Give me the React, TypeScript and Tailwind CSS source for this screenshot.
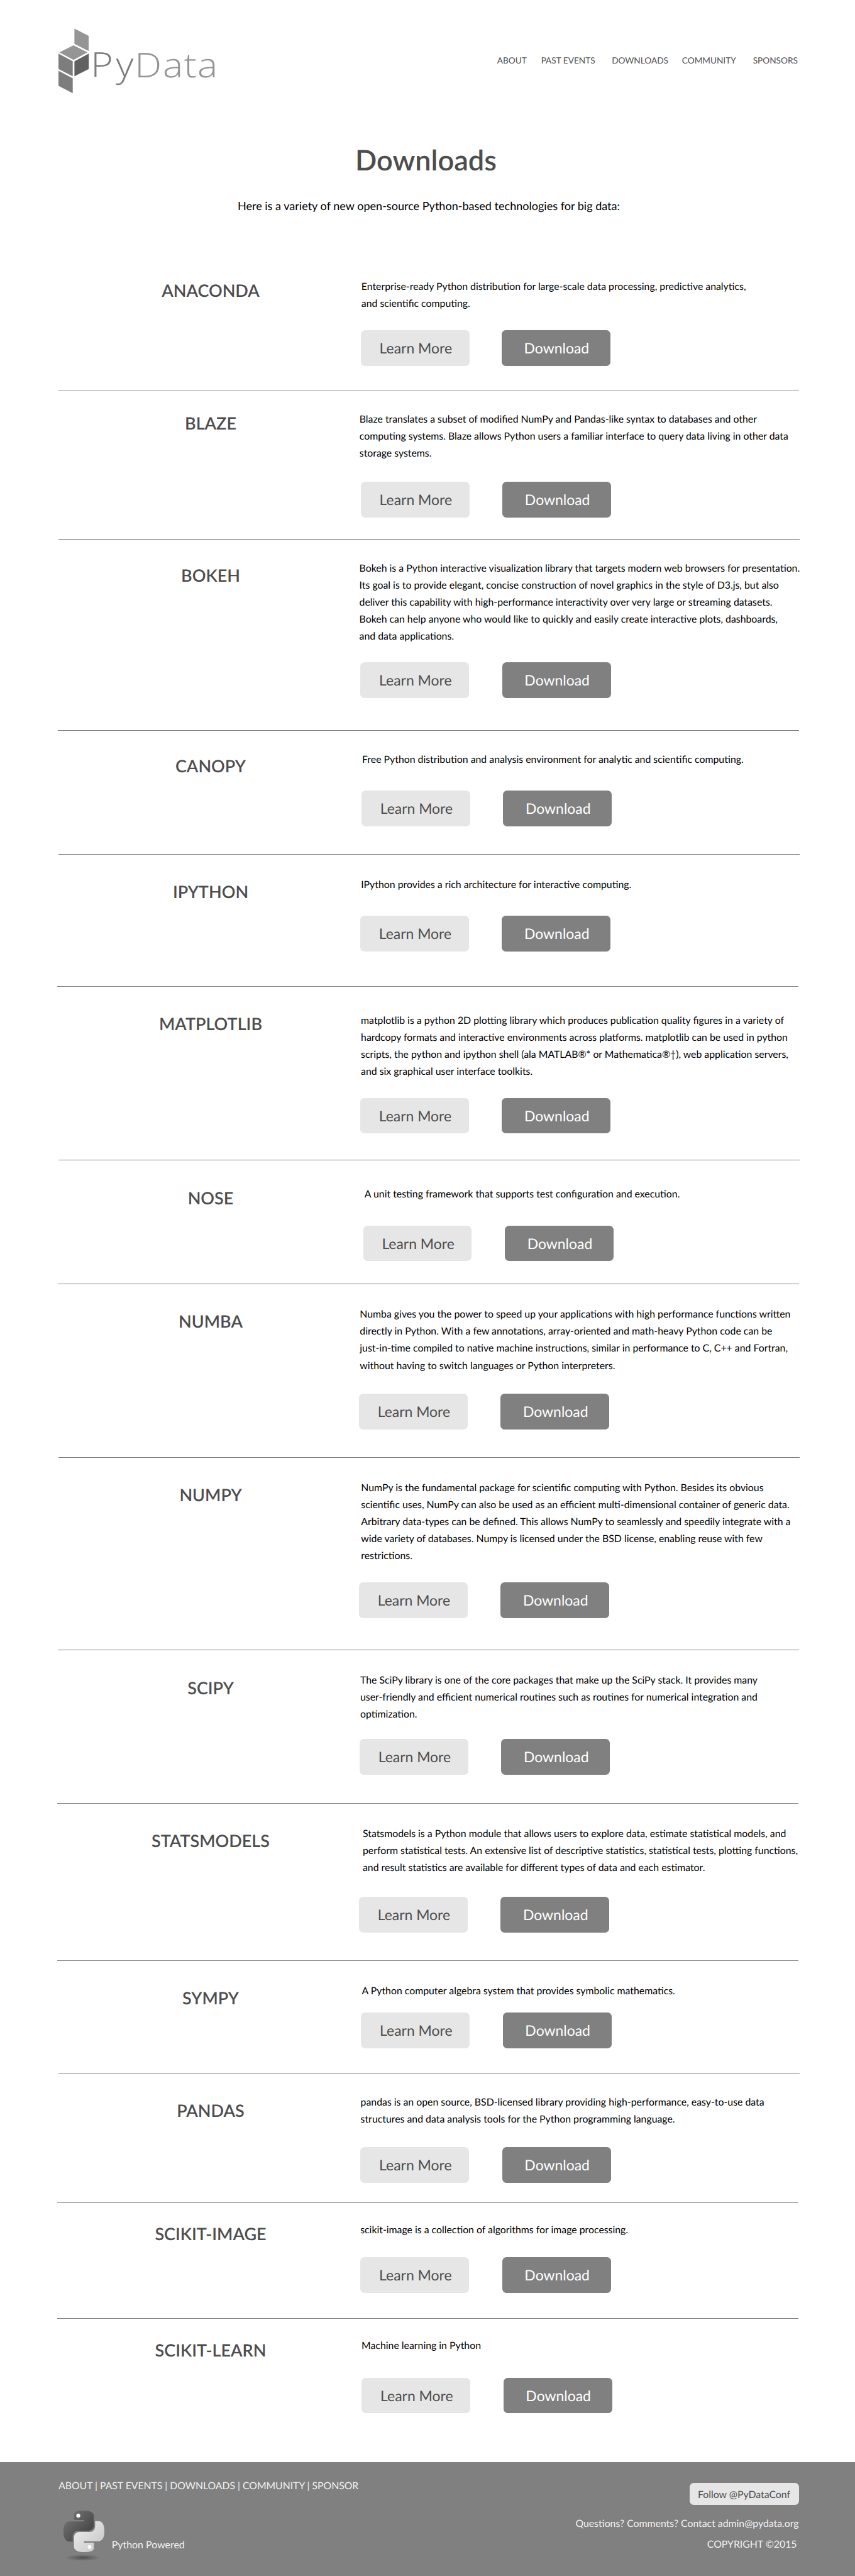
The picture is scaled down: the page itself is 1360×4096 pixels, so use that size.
import React from 'react';

interface Library {
  name: string;
  lines: string[];
  row: string; // row height, rule included
  title: string; // heading offset
  text: string; // description offset
  actions: string; // button group offset
  gap: string;
  rule: string; // rule's left edge
}

const RULE_A = 'ml-[91.5px]';
const RULE_B = 'ml-[93px]';
const RULE_C = 'ml-[90.5px]';
const GAP = 'gap-[52.6px]';

const LIBRARIES: Library[] = [
  {
    name: 'ANACONDA',
    lines: [
      'Enterprise-ready Python distribution for large-scale data processing, predictive analytics,',
      'and scientific computing.',
    ],
    row: 'h-[200px]', title: 'mt-[23px]', text: 'mt-[19px] ml-[4.8px]', actions: 'mt-[29.8px] ml-[3.7px]', gap: 'gap-[51.3px]', rule: RULE_A,
  },
  {
    name: 'BLAZE',
    lines: [
      'Blaze translates a subset of modified NumPy and Pandas-like syntax to databases and other',
      'computing systems. Blaze allows Python users a familiar interface to query data living in other data',
      'storage systems.',
    ],
    row: 'h-[236px]', title: 'mt-[33.6px]', text: 'mt-[30px] ml-[1.8px]', actions: 'mt-[32.4px] ml-[3.7px]', gap: GAP, rule: RULE_B,
  },
  {
    name: 'BOKEH',
    lines: [
      'Bokeh is a Python interactive visualization library that targets modern web browsers for presentation.',
      'Its goal is to provide elegant, concise construction of novel graphics in the style of D3.js, but also',
      'deliver this capability with high-performance interactivity over very large or streaming datasets.',
      'Bokeh can help anyone who would like to quickly and easily create interactive plots, dashboards,',
      'and data applications.',
    ],
    row: 'h-[304px]', title: 'mt-[40.4px]', text: 'mt-[31px] ml-[1.6px]', actions: 'mt-[28.7px] ml-[3.2px]', gap: GAP, rule: RULE_A,
  },
  {
    name: 'CANOPY',
    lines: ['Free Python distribution and analysis environment for analytic and scientific computing.'],
    row: 'h-[197px]', title: 'mt-[39px]', text: 'mt-[31px] ml-[6.1px]', actions: 'mt-[37.1px] ml-[4.8px]', gap: GAP, rule: RULE_B,
  },
  {
    name: 'IPYTHON',
    lines: ['IPython provides a rich architecture for interactive computing.'],
    row: 'h-[210px]', title: 'mt-[42.3px]', text: 'mt-[33px] ml-[4.2px]', actions: 'mt-[37.2px] ml-[2.8px]', gap: GAP, rule: RULE_C,
  },
  {
    name: 'MATPLOTLIB',
    lines: [
      'matplotlib is a python 2D plotting library which produces publication quality figures in a variety of',
      'hardcopy formats and interactive environments across platforms. matplotlib can be used in python',
      'scripts, the python and ipython shell (ala MATLAB®* or Mathematica®†), web application servers,',
      'and six graphical user interface toolkits.',
    ],
    row: 'h-[276px]', title: 'mt-[42.2px]', text: 'mt-[39px] ml-[4.1px]', actions: 'mt-[29px] ml-[2.8px]', gap: GAP, rule: RULE_B,
  },
  {
    name: 'NOSE',
    lines: ['A unit testing framework that supports test configuration and execution.'],
    row: 'h-[197px]', title: 'mt-[43.4px]', text: 'mt-[39px] ml-[9.8px]', actions: 'mt-[37.4px] ml-[7.5px]', gap: GAP, rule: RULE_A,
  },
  {
    name: 'NUMBA',
    lines: [
      'Numba gives you the power to speed up your applications with high performance functions written',
      'directly in Python. With a few annotations, array-oriented and math-heavy Python code can be',
      'just-in-time compiled to native machine instructions, similar in performance to C, C++ and Fortran,',
      'without having to switch languages or Python interpreters.',
    ],
    row: 'h-[276px]', title: 'mt-[42.2px]', text: 'mt-[33.5px] ml-[2.3px]', actions: 'mt-[32.3px] ml-[0.8px]', gap: GAP, rule: RULE_B,
  },
  {
    name: 'NUMPY',
    lines: [
      'NumPy is the fundamental package for scientific computing with Python. Besides its obvious',
      'scientific uses, NumPy can also be used as an efficient multi-dimensional container of generic data.',
      'Arbitrary data-types can be defined. This allows NumPy to seamlessly and speedily integrate with a',
      'wide variety of databases. Numpy is licensed under the BSD license, enabling reuse with few',
      'restrictions.',
    ],
    row: 'h-[306px]', title: 'mt-[41.8px]', text: 'mt-[33px] ml-[4.3px]', actions: 'mt-[29.5px] ml-[0.8px]', gap: GAP, rule: RULE_A,
  },
  {
    name: 'SCIPY',
    lines: [
      'The SciPy library is one of the core packages that make up the SciPy stack. It provides many',
      'user-friendly and efficient numerical routines such as routines for numerical integration and',
      'optimization.',
    ],
    row: 'h-[244px]', title: 'mt-[42.8px]', text: 'mt-[33px] ml-[3px]', actions: 'mt-[26.4px] ml-[1.8px]', gap: GAP, rule: RULE_C,
  },
  {
    name: 'STATSMODELS',
    lines: [
      'Statsmodels is a Python module that allows users to explore data, estimate statistical models, and',
      'perform statistical tests. An extensive list of descriptive statistics, statistical tests, plotting functions,',
      'and result statistics are available for different types of data and each estimator.',
    ],
    row: 'h-[250px]', title: 'mt-[41.8px]', text: 'mt-[33px] ml-[7px]', actions: 'mt-[34px] ml-[0.8px]', gap: GAP, rule: RULE_C,
  },
  {
    name: 'SYMPY',
    lines: ['A Python computer algebra system that provides symbolic mathematics.'],
    row: 'h-[180px]', title: 'mt-[42.4px]', text: 'mt-[33px] ml-[5.5px]', actions: 'mt-[22px] ml-[4.2px]', gap: GAP, rule: RULE_B,
  },
  {
    name: 'PANDAS',
    lines: [
      'pandas is an open source, BSD-licensed library providing high-performance, easy-to-use data',
      'structures and data analysis tools for the Python programming language.',
    ],
    row: 'h-[205px]', title: 'mt-[41.4px]', text: 'mt-[30.3px] ml-[3.6px]', actions: 'mt-[31.7px] ml-[3.2px]', gap: GAP, rule: RULE_C,
  },
  {
    name: 'SCIKIT-IMAGE',
    lines: ['scikit-image is a collection of algorithms for image processing.'],
    row: 'h-[184px]', title: 'mt-[32.3px]', text: 'mt-[28px] ml-[3.2px]', actions: 'mt-[31.2px] ml-[3.2px]', gap: GAP, rule: RULE_C,
  },
  {
    name: 'SCIKIT-LEARN',
    lines: ['Machine learning in Python'],
    row: 'h-[228px]', title: 'mt-[32.7px]', text: 'mt-[28px] ml-[5.1px]', actions: 'mt-[38.6px] ml-[5.2px]', gap: GAP, rule: '',
  },
];

const NAV = [
  { label: 'ABOUT', width: 'w-[69.8px]' },
  { label: 'PAST EVENTS', width: 'w-[112.5px]' },
  { label: 'DOWNLOADS', width: 'w-[111.7px]' },
  { label: 'COMMUNITY', width: 'w-[112.9px]' },
  { label: 'SPONSORS', width: 'w-[72px]' },
];

function PyDataLogo() {
  return (
    <svg
      className="ml-[86.8px] mt-[40.7px] h-[111.2px] w-[260.3px] shrink-0"
      viewBox="160 75 480 205"
      preserveAspectRatio="none"
      aria-label="PyData"
    >
      <polygon points="217.9,83.3 259.6,104.7 259.6,149 217.9,128" fill="#959595" />
      <polygon points="215.4,132 256.1,152.7 215.4,175 173.6,152.7" fill="#959595" />
      <polygon points="171.1,156.7 212.9,178.7 212.9,223 171.1,201.7" fill="#7d7d7d" />
      <polygon points="217.9,179.3 260,156.7 260,201.7 217.9,223" fill="#616161" />
      <polygon points="171.1,207 212.9,229 212.9,272.7 171.1,251.3" fill="#7d7d7d" />
      <g fontFamily='"Open Sans", sans-serif' fontWeight="300" fontSize="100">
        <text transform="translate(265.8 224) scale(1.12 1)" x="0 65.9" fill="#7b7b7b">Py</text>
        <text transform="translate(394.7 226) scale(1.12 1)" x="0 73.7 128.6 164.3" fill="#949494">Data</text>
      </g>
    </svg>
  );
}

function PythonLogo() {
  return (
    <svg className="ml-[7.8px] h-[82.5px] w-[65px] shrink-0" viewBox="0 0 24 30" preserveAspectRatio="none" aria-hidden="true">
      <defs>
        <linearGradient id="snake-dark" x1="0" y1="0" x2="1" y2="1">
          <stop offset="0" stopColor="#7a7a7a" />
          <stop offset="0.7" stopColor="#4c4c4c" />
        </linearGradient>
        <linearGradient id="snake-light" x1="0" y1="0" x2="1" y2="1">
          <stop offset="0.3" stopColor="#e4e4e4" />
          <stop offset="0.9" stopColor="#c6c6c6" />
        </linearGradient>
        <radialGradient id="snake-shadow">
          <stop offset="0" stopColor="#000" stopOpacity="0.38" />
          <stop offset="1" stopColor="#000" stopOpacity="0" />
        </radialGradient>
      </defs>
      <ellipse cx="11.4" cy="27.2" rx="10.4" ry="1.9" fill="url(#snake-shadow)" />
      <path
        fill="url(#snake-dark)"
        d="M14.25.18l.9.2.73.26.59.3.45.32.34.34.25.34.16.33.1.3.04.26.02.2-.01.13V8.5l-.05.63-.13.55-.21.46-.26.38-.3.31-.33.25-.35.19-.35.14-.33.1-.3.07-.26.04-.21.02H8.77l-.69.05-.59.14-.5.22-.41.27-.33.32-.27.35-.2.36-.15.37-.1.35-.07.32-.04.27-.02.21v3.06H3.17l-.21-.03-.28-.07-.32-.12-.35-.18-.36-.26-.36-.36-.35-.46-.32-.59-.28-.73-.21-.88-.14-1.05-.05-1.23.06-1.22.16-1.04.24-.87.32-.71.36-.57.4-.44.42-.33.42-.24.4-.16.36-.1.32-.05.24-.01h.16l.06.01h8.16v-.83H6.18l-.01-2.75-.02-.37.05-.34.11-.31.17-.28.25-.26.31-.23.38-.2.44-.18.51-.15.58-.12.64-.1.71-.06.77-.04.84-.02 1.27.05z"
      />
      <path
        fill="url(#snake-light)"
        d="M21.04 6.11l.28.06.32.12.35.18.36.27.36.35.35.47.32.59.28.73.21.88.14 1.04.05 1.23-.06 1.23-.16 1.04-.24.86-.32.71-.36.57-.4.45-.42.33-.42.24-.4.16-.36.09-.32.05-.24.02-.16-.01h-8.22v.82h5.84l.01 2.76.02.36-.05.34-.11.31-.17.29-.25.25-.31.24-.38.2-.44.17-.51.15-.58.13-.64.09-.71.07-.77.04-.84.01-1.27-.04-1.07-.14-.9-.2-.73-.25-.59-.3-.45-.33-.34-.34-.25-.34-.16-.33-.1-.3-.04-.25-.02-.2.01-.13v-5.34l.05-.64.13-.54.21-.46.26-.38.3-.32.33-.24.35-.2.35-.14.33-.1.3-.06.26-.04.21-.02.13-.01h5.84l.69-.05.59-.14.5-.21.41-.28.33-.32.27-.35.2-.36.15-.36.1-.35.07-.32.04-.28.02-.21V6.07h2.09l.14.01z"
      />
      <circle cx="8.69" cy="2.9" r="1.15" fill="#fff" />
      <circle cx="15.31" cy="21.1" r="1.1" fill="#fff" />
    </svg>
  );
}

function LibraryRow({ lib }: { lib: Library }) {
  return (
    <section className={`flex flex-col justify-between ${lib.row}`}>
      <div className="flex items-start">
        <div className="w-[570px] shrink-0 pl-[100px]">
          <h2 className={`text-center text-[27px] leading-[33px] font-semibold text-[#4d4d4d] ${lib.title}`}>{lib.name}</h2>
        </div>
        <div>
          <p className={`-mb-[0.6px] pt-[0.6px] text-[15.83px] leading-[27.15px] whitespace-nowrap text-black ${lib.text}`}>
            {lib.lines.map((line) => (
              <span key={line} className="block">{line}</span>
            ))}
          </p>
          <div className={`flex text-[22.95px] leading-[56.7px] ${lib.gap} ${lib.actions}`}>
            <a className="h-[56.7px] w-[172.9px] rounded-[6.5px] bg-[#e6e6e6] pl-[29.9px] whitespace-nowrap text-[#4d4d4d]">Learn More</a>
            <a className="h-[56.7px] w-[172.9px] rounded-[6.5px] bg-[#808080] pl-[35.7px] whitespace-nowrap text-white">Download</a>
          </div>
        </div>
      </div>
      {lib.rule && <hr className={`h-px w-[1179px] shrink-0 border-0 bg-[#808080] ${lib.rule}`} />}
    </section>
  );
}

export default function App() {
  return (
    <div className="flex h-[4096px] w-[1360px] flex-col overflow-hidden bg-white font-['Lato',sans-serif] font-normal antialiased [text-rendering:geometricPrecision]">
      <header className="flex h-[226px] shrink-0 items-start justify-between">
        <PyDataLogo />
        <nav className="mt-[88.4px] mr-[90.3px] flex text-[13.64px] leading-4 whitespace-nowrap text-[#4d4d4d]">
          {NAV.map((item) => (
            <a key={item.label} className={item.width}>{item.label}</a>
          ))}
        </nav>
      </header>

      <main className="flex h-[3689px] shrink-0 flex-col">
        <div className="flex h-[196px] shrink-0 flex-col items-center">
          <h1 className="pr-[5px] text-[45.1px] leading-[55px] font-semibold text-[#4d4d4d]">Downloads</h1>
          <p className="mt-[34.5px] pl-[4px] text-[18.06px] leading-[22px] text-black">
            Here is a variety of new open-source Python-based technologies for big data:
          </p>
        </div>
        {LIBRARIES.map((lib) => (
          <LibraryRow key={lib.name} lib={lib} />
        ))}
      </main>

      <footer className="flex h-[181px] shrink-0 justify-between bg-[#808080] text-[15.8px] leading-[19px] text-[#f2f2f2]">
        <div className="pt-[28.3px] pl-[93.2px]">
          <p className="text-[15.74px]">ABOUT | PAST EVENTS | DOWNLOADS | COMMUNITY | SPONSOR</p>
          <div className="mt-[29.7px] flex items-start">
            <PythonLogo />
            <span className="mt-[45.5px] ml-[11.7px] text-[15.94px]">Python Powered</span>
          </div>
        </div>
        <div className="flex flex-col items-end pt-[33px] pr-[89.5px]">
          <a className="h-[35.1px] w-[173.2px] rounded-[6.5px] bg-[#e6e6e6] pt-px pl-[12.6px] text-[15.85px] leading-[35px] whitespace-nowrap text-[#4d4d4d]">
            Follow @PyDataConf
          </a>
          <p className="mt-[20.1px]">Questions? Comments? Contact admin@pydata.org</p>
          <p className="mt-[13.8px] mr-[3px]">COPYRIGHT ©2015</p>
        </div>
      </footer>
    </div>
  );
}
